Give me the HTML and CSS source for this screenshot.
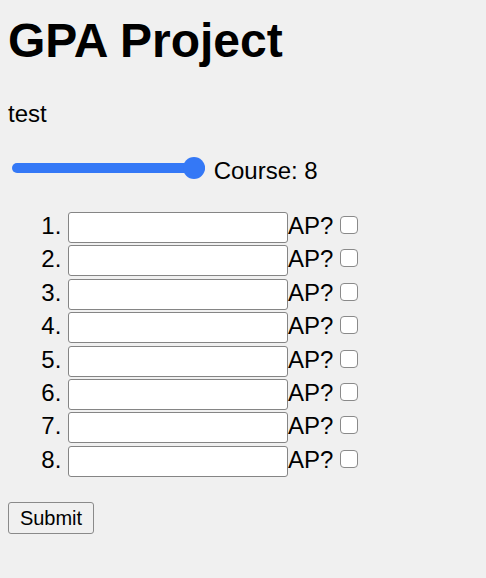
FILE: index.html
```html
<!DOCTYPE html>
<html lang="en">
<head>
<meta charset="utf-8">
<title>GPA Project</title>
<link rel="stylesheet" href="styles.css">
</head>
<body class="page">
<h1 class="title">GPA Project</h1>
<p class="note">test</p>
<div class="slider-row"><input class="slider" type="range" min="1" max="8" value="8"> Course: 8</div>
<form class="form">
<ol class="courses">
<li class="course"><input class="course-input" type="text">AP? <input class="ap-box" type="checkbox"></li>
<li class="course"><input class="course-input" type="text">AP? <input class="ap-box" type="checkbox"></li>
<li class="course"><input class="course-input" type="text">AP? <input class="ap-box" type="checkbox"></li>
<li class="course"><input class="course-input" type="text">AP? <input class="ap-box" type="checkbox"></li>
<li class="course"><input class="course-input" type="text">AP? <input class="ap-box" type="checkbox"></li>
<li class="course"><input class="course-input" type="text">AP? <input class="ap-box" type="checkbox"></li>
<li class="course"><input class="course-input" type="text">AP? <input class="ap-box" type="checkbox"></li>
<li class="course"><input class="course-input" type="text">AP? <input class="ap-box" type="checkbox"></li>
</ol>
<div class="actions"><button class="submit" type="button">Submit</button></div>
</form>
</body>
</html>
```
FILE: styles.css
```css
html {
  background: #f0f0f0;
}
.page {
  margin: 0;
  padding: 0 8px 8px;
  background: #f0f0f0;
  color: #000;
  font-family: "Liberation Sans", Arial, Helvetica, sans-serif;
  font-size: 24px;
  line-height: 28px;
}
.title {
  font-size: 48px;
  line-height: 56px;
  font-weight: bold;
  margin: 13px 0 31px;
}
.note {
  margin: 0;
}
.slider-row {
  margin-top: 27px;
}
.slider {
  -webkit-appearance: none;
  appearance: none;
  width: 193px;
  height: 22px;
  margin: 2px 2px 0 4px;
  padding: 0;
  background: transparent;
  vertical-align: baseline;
}
.slider::-webkit-slider-runnable-track {
  height: 10px;
  background: #3478f6;
  border-radius: 5px;
}
.slider::-webkit-slider-thumb {
  -webkit-appearance: none;
  appearance: none;
  width: 22px;
  height: 22px;
  border-radius: 50%;
  background: #3478f6;
  margin-top: -6px;
  border: none;
}
.form {
  margin: 0;
}
.courses {
  margin: 27px 0 0;
  padding-left: 60px;
}
.course {
  line-height: 28px;
}
.course-input {
  box-sizing: border-box;
  width: 220px;
  height: 31px;
  margin: 0 0 2.4px;
  padding: 3px 2px;
  border: 1px solid #858585;
  border-radius: 3px;
  background: #fff;
  font-family: "Liberation Sans", Arial, sans-serif;
  font-size: 20px;
  line-height: 23px;
  vertical-align: baseline;
}
.ap-box {
  -webkit-appearance: none;
  appearance: none;
  box-sizing: border-box;
  width: 18px;
  height: 18px;
  margin: 0;
  border: 1px solid #8a8a8a;
  border-radius: 4px;
  background: #fff;
  vertical-align: baseline;
}
.actions {
  margin-top: 23px;
}
.submit {
  box-sizing: border-box;
  width: 86px;
  height: 32px;
  padding: 0;
  border: 1px solid #8a8a8a;
  border-radius: 3px;
  background: #f0f0f0;
  color: #000;
  font-family: "Liberation Sans", Arial, sans-serif;
  font-size: 20px;
  line-height: 23px;
}
```
